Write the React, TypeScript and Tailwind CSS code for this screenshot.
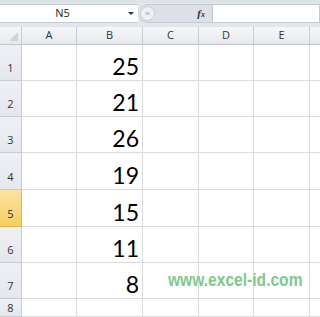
import React from "react";

const cols = [
  { label: "A", w: "w-[55px]" },
  { label: "B", w: "w-[66px]" },
  { label: "C", w: "w-[56px]" },
  { label: "D", w: "w-[55px]" },
  { label: "E", w: "w-[56px]" },
];

const rows = [
  { n: 1, v: "25", h: "h-[36px]" },
  { n: 2, v: "21", h: "h-[36px]" },
  { n: 3, v: "26", h: "h-[36px]" },
  { n: 4, v: "19", h: "h-[37px]" },
  { n: 5, v: "15", h: "h-[37px]" },
  { n: 6, v: "11", h: "h-[36px]" },
  { n: 7, v: "8", h: "h-[36px]" },
  { n: 8, v: "", h: "h-[18px]" },
];

export default function App() {
  return (
    <div className="relative w-[320px] h-[317px] overflow-hidden bg-white font-['Open_Sans',sans-serif]">
      {/* name box + formula bar */}
      <div className="h-[27px] bg-[#e3e7ec] border-t-[3px] border-[#dfe3e8] flex items-start pt-[1px]">
        <div className="h-[19px] w-[138px] bg-white border-y border-[#c4cad2] flex items-center">
          <span className="flex-1 text-center text-[11px] text-[#222] pl-[1px]">N5</span>
          <span className="w-[14px] flex justify-center">
            <span className="w-0 h-0 border-x-[3px] border-x-transparent border-t-[3px] border-t-[#333]" />
          </span>
        </div>
        <div className="h-[19px] w-[74px] bg-[#dde1e7] border-y border-[#c4cad2] rounded-l-full flex items-center">
          <span className="ml-[2px] w-[15px] h-[15px] rounded-full bg-[#eef0f3] border border-[#c8cdd4] flex items-center justify-center">
            <span className="w-[5px] h-[3px] rounded-full bg-[#c9ced5]" />
          </span>
          <span className="ml-auto mr-[7px] text-[11px] italic font-bold font-['Liberation_Serif',serif] text-[#333]">
            f<span className="text-[8px]">x</span>
          </span>
        </div>
        <div className="h-[19px] flex-1 bg-white border border-[#c4cad2]" />
      </div>

      {/* column headers */}
      <div className="flex h-[18px] bg-gradient-to-b from-[#f6f7f9] to-[#e6e9ee] border-b border-[#c1c6cc]">
        <div className="w-[22px] border-r border-[#c8ccd2] relative">
          <span className="absolute right-[3px] bottom-[3px] w-0 h-0 border-l-[9px] border-l-transparent border-b-[9px] border-b-[#d0d4d9]" />
        </div>
        {cols.map((c) => (
          <div
            key={c.label}
            className={`${c.w} border-r border-[#c8ccd2] flex items-center justify-center text-[11px] text-[#333]`}
          >
            {c.label}
          </div>
        ))}
        <div className="flex-1" />
      </div>

      {/* grid rows */}
      {rows.map((r) => (
        <div key={r.n} className={`flex ${r.h}`}>
          <div
            className={`w-[22px] border-r border-b flex items-end justify-center text-[11px] text-[#333] ${
              r.n === 8 ? "pb-0" : "pb-[4px]"
            } ${
              r.n === 5
                ? "bg-gradient-to-b from-[#fbe3a0] to-[#f7cf5e] border-[#e0b94a]"
                : "bg-gradient-to-b from-[#eef0f4] to-[#e4e8ed] border-[#c8ccd2]"
            }`}
          >
            {r.n}
          </div>
          <div className="w-[55px] border-r border-b border-[#dadcdf]" />
          <div className="w-[66px] border-r border-b border-[#dadcdf] flex items-end justify-end pr-[3px] pb-[2px] text-[23px] leading-none font-['Lato',sans-serif] text-black">
            {r.v}
          </div>
          <div className="w-[56px] border-r border-b border-[#dadcdf]" />
          <div className="w-[55px] border-r border-b border-[#dadcdf]" />
          <div className="w-[56px] border-r border-b border-[#dadcdf]" />
          <div className="flex-1 border-b border-[#dadcdf]" />
        </div>
      ))}

      {/* watermark */}
      <div className="absolute left-[168px] top-[266px] origin-left scale-x-[0.82] whitespace-nowrap text-[19px] font-bold text-[#7dca8c] font-['Liberation_Sans',sans-serif]">
        www.excel-id.com
      </div>
    </div>
  );
}
